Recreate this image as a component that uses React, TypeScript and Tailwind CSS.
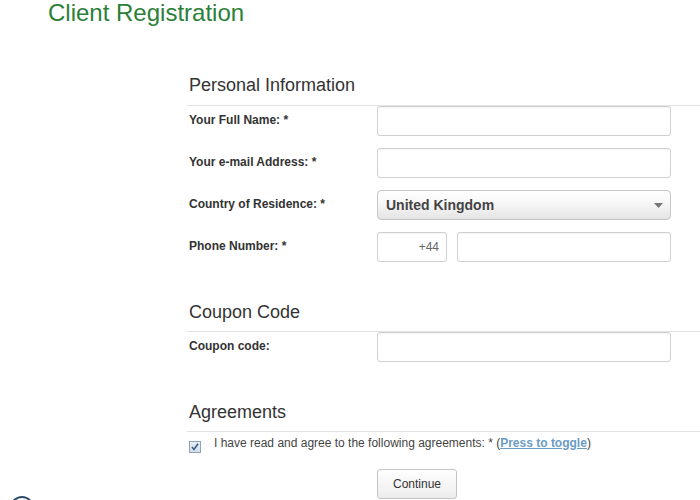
import React from "react";

const font = { fontFamily: '"Liberation Sans", Arial, sans-serif' };

function Row({ label, children, last }: { label: string; children: React.ReactNode; last?: boolean }) {
  return (
    <div className={`flex h-[30px] items-center ${last ? "" : "mb-[12px]"}`}>
      <div className="w-[190px] pl-[2px] text-[12px] font-bold text-[#333] leading-[14px] -mt-[2px]">{label}</div>
      <div className="flex h-[30px] items-stretch">{children}</div>
    </div>
  );
}

function Input({ w, children, right }: { w: number; children?: React.ReactNode; right?: boolean }) {
  return (
    <div
      className={`h-[30px] rounded-[3px] border border-[#cfcfcf] bg-white shadow-[inset_0_1px_1px_rgba(0,0,0,0.04)] flex items-center ${right ? "justify-end pr-[7px]" : ""} text-[12px] text-[#666]`}
      style={{ width: w }}
    >
      {children}
    </div>
  );
}

function Heading({ children, top, pb }: { children: React.ReactNode; top: number; pb: number }) {
  return (
    <div
      className="border-b border-[#e3e3e3] pl-[2px] text-[18px] leading-[20px] text-[#333]"
      style={{ marginTop: top, paddingBottom: pb }}
    >
      {children}
    </div>
  );
}

export default function App() {
  return (
    <div className="relative h-[500px] w-[700px] overflow-hidden bg-white" style={font}>
      <div className="pl-[48px] text-[24px] leading-[26px] text-[#2b7f38]">Client Registration</div>
      <div className="ml-[187px] w-[513px]">
        <Heading top={49} pb={10}>Personal Information</Heading>
        <Row label="Your Full Name: *">
          <Input w={294} />
        </Row>
        <Row label="Your e-mail Address: *">
          <Input w={294} />
        </Row>
        <Row label="Country of Residence: *">
          <div className="flex h-[30px] w-[294px] items-center justify-between rounded-[4px] border border-[#c6c6c6] bg-gradient-to-b from-white via-[#f5f5f5] to-[#e4e4e4] pl-[8px] pr-[7px]">
            <span className="text-[14px] font-bold text-[#444]">United Kingdom</span>
            <svg width="9" height="5" viewBox="0 0 9 5">
              <path d="M0 0 H9 L4.5 5 Z" fill="#777" />
            </svg>
          </div>
        </Row>
        <Row label="Phone Number: *" last>
          <Input w={70} right>
            +44
          </Input>
          <div className="w-[10px]" />
          <Input w={214} />
        </Row>

        <Heading top={40} pb={9}>Coupon Code</Heading>
        <Row label="Coupon code:" last>
          <Input w={294} />
        </Row>

        <Heading top={40} pb={9}>Agreements</Heading>
        <div className="mt-[4px] flex items-start pl-[2px]">
          <div className="mt-[5px] flex h-[12px] w-[12px] items-center justify-center border border-[#8ea3b8] bg-gradient-to-b from-[#e8eef4] to-[#d4dde8]">
            <svg width="8" height="8" viewBox="0 0 8 8">
              <path d="M1 4 L3 6.5 L7 0.8" stroke="#3a5f8a" strokeWidth="1.6" fill="none" />
            </svg>
          </div>
          <div className="ml-[13px] text-[12px] leading-[14px] text-[#444]">
            I have read and agree to the following agreements: * (
            <span className="font-bold text-[#6a9cc4] underline">Press to toggle</span>)
          </div>
        </div>
        <div className="ml-[190px] mt-[16px]">
          <div className="flex h-[30px] w-[80px] items-center justify-center rounded-[3px] border border-[#c4c4c4] bg-gradient-to-b from-white to-[#ececec] text-[12px] text-[#333]">
            Continue
          </div>
        </div>
      </div>
      <div className="absolute left-[10px] top-[496px] h-[24px] w-[24px] rounded-full border-2 border-[#2c4a6e]" />
    </div>
  );
}
